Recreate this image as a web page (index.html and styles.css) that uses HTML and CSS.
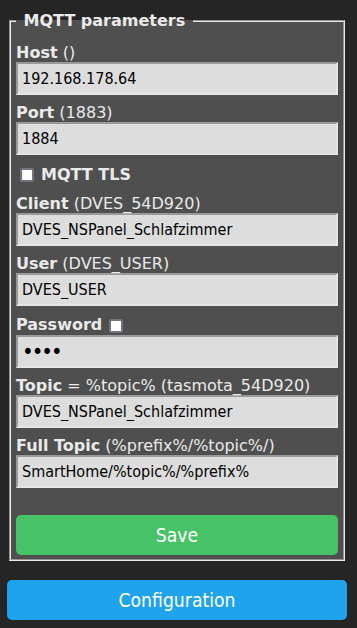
FILE: index.html
```html
<!DOCTYPE html>
<html lang="en">
<head>
  <meta charset="UTF-8" />
  <meta name="viewport" content="width=device-width, initial-scale=1.0"/>
  <title>MQTT parameters</title>
  <link rel="stylesheet" href="styles.css">
</head>
<body>

  <div class="page">
    <fieldset class="box">
      <legend><b>&nbsp;MQTT parameters&nbsp;</b></legend>
      <form class="form">
        <p class="field"><span class="label"><b>Host</b> ()</span><input type="text" value="192.168.178.64" /></p>
        <p class="field"><span class="label"><b>Port</b> (1883)</span><input type="text" value="1884" /></p>
        <p class="check"><input type="checkbox" class="tick" /><b>MQTT TLS</b></p>
        <p class="field"><span class="label"><b>Client</b> (DVES_54D920)</span><input type="text" value="DVES_NSPanel_Schlafzimmer" /></p>
        <p class="field"><span class="label"><b>User</b> (DVES_USER)</span><input type="text" value="DVES_USER" /></p>
        <p class="field"><span class="label label-tall"><b>Password</b><input type="checkbox" class="tick" /></span><input type="password" class="secret" value="1234" /></p>
        <p class="field"><span class="label"><b>Topic</b> = %topic% (tasmota_54D920)</span><input type="text" value="DVES_NSPanel_Schlafzimmer" /></p>
        <p class="field"><span class="label"><b>Full Topic</b> (%prefix%/%topic%/)</span><input type="text" value="SmartHome/%topic%/%prefix%" /></p>
        <button type="button" class="btn btn-save">Save</button>
      </form>
    </fieldset>
    <button type="button" class="btn btn-config">Configuration</button>
  </div>

</body>
</html>
```
FILE: styles.css
```css
body {
  margin: 0;
  background: #252525;
  color: #eaeaea;
  font-family: "DejaVu Sans", Verdana, sans-serif;
  font-size: 16px;
}

.page {
  width: 340px;
  padding: 11px 0 0 7px;
}

.box {
  margin: 0 2px;
  padding: 12px 5px 4px;
  background: #4f4f4f;
  border: 2px groove #e8e8e8;
}

.box legend {
  padding: 0 2px;
  line-height: 19px;
}

.form {
  display: flex;
  flex-direction: column;
  gap: 7px;
  margin: 0;
}

.field,
.check {
  margin: 0;
}

.label {
  display: flex;
  align-items: center;
  gap: 5px;
  height: 20px;
  white-space: pre;
}

.label b {
  margin-right: -5px;
}

.label-tall {
  height: 22px;
}

.label-tall b {
  margin-right: 0;
}

/* inputs and buttons keep the narrower system face */
.field input[type="text"],
.field input[type="password"],
.btn {
  font-family: "DejaVu Sans Condensed", "DejaVu Sans", sans-serif;
}

.field input[type="text"],
.field input[type="password"] {
  display: block;
  box-sizing: border-box;
  width: 100%;
  height: 33px;
  margin: 0;
  padding: 4px;
  font-size: 16px;
  color: #000;
  background: #dddddd;
  border: 2px solid;
  border-color: #9a9a9a #e6e6e6 #e6e6e6 #9a9a9a;
  outline: none;
}

.field input.secret {
  font-size: 22px;
  letter-spacing: -2px;
  padding-left: 4px;
}

.check {
  display: flex;
  align-items: center;
  height: 24px;
  padding-left: 4px;
}

.tick {
  appearance: none;
  width: 14px;
  height: 14px;
  margin: 2px 7px 0 0;
  background: #fff;
  border: 2px solid #76737e;
  border-radius: 2px;
  box-sizing: border-box;
}

.label .tick {
  margin: 3px 0 0 2px;
}

.btn {
  display: block;
  width: 100%;
  height: 40px;
  border: 0;
  border-radius: 5px;
  color: #fff;
  font-size: 19.2px;
  cursor: pointer;
}

.btn-save {
  margin-top: 20px;
  background: #47c266;
}

.btn-config {
  margin-top: 19px;
  background: #1fa3ec;
}
```
